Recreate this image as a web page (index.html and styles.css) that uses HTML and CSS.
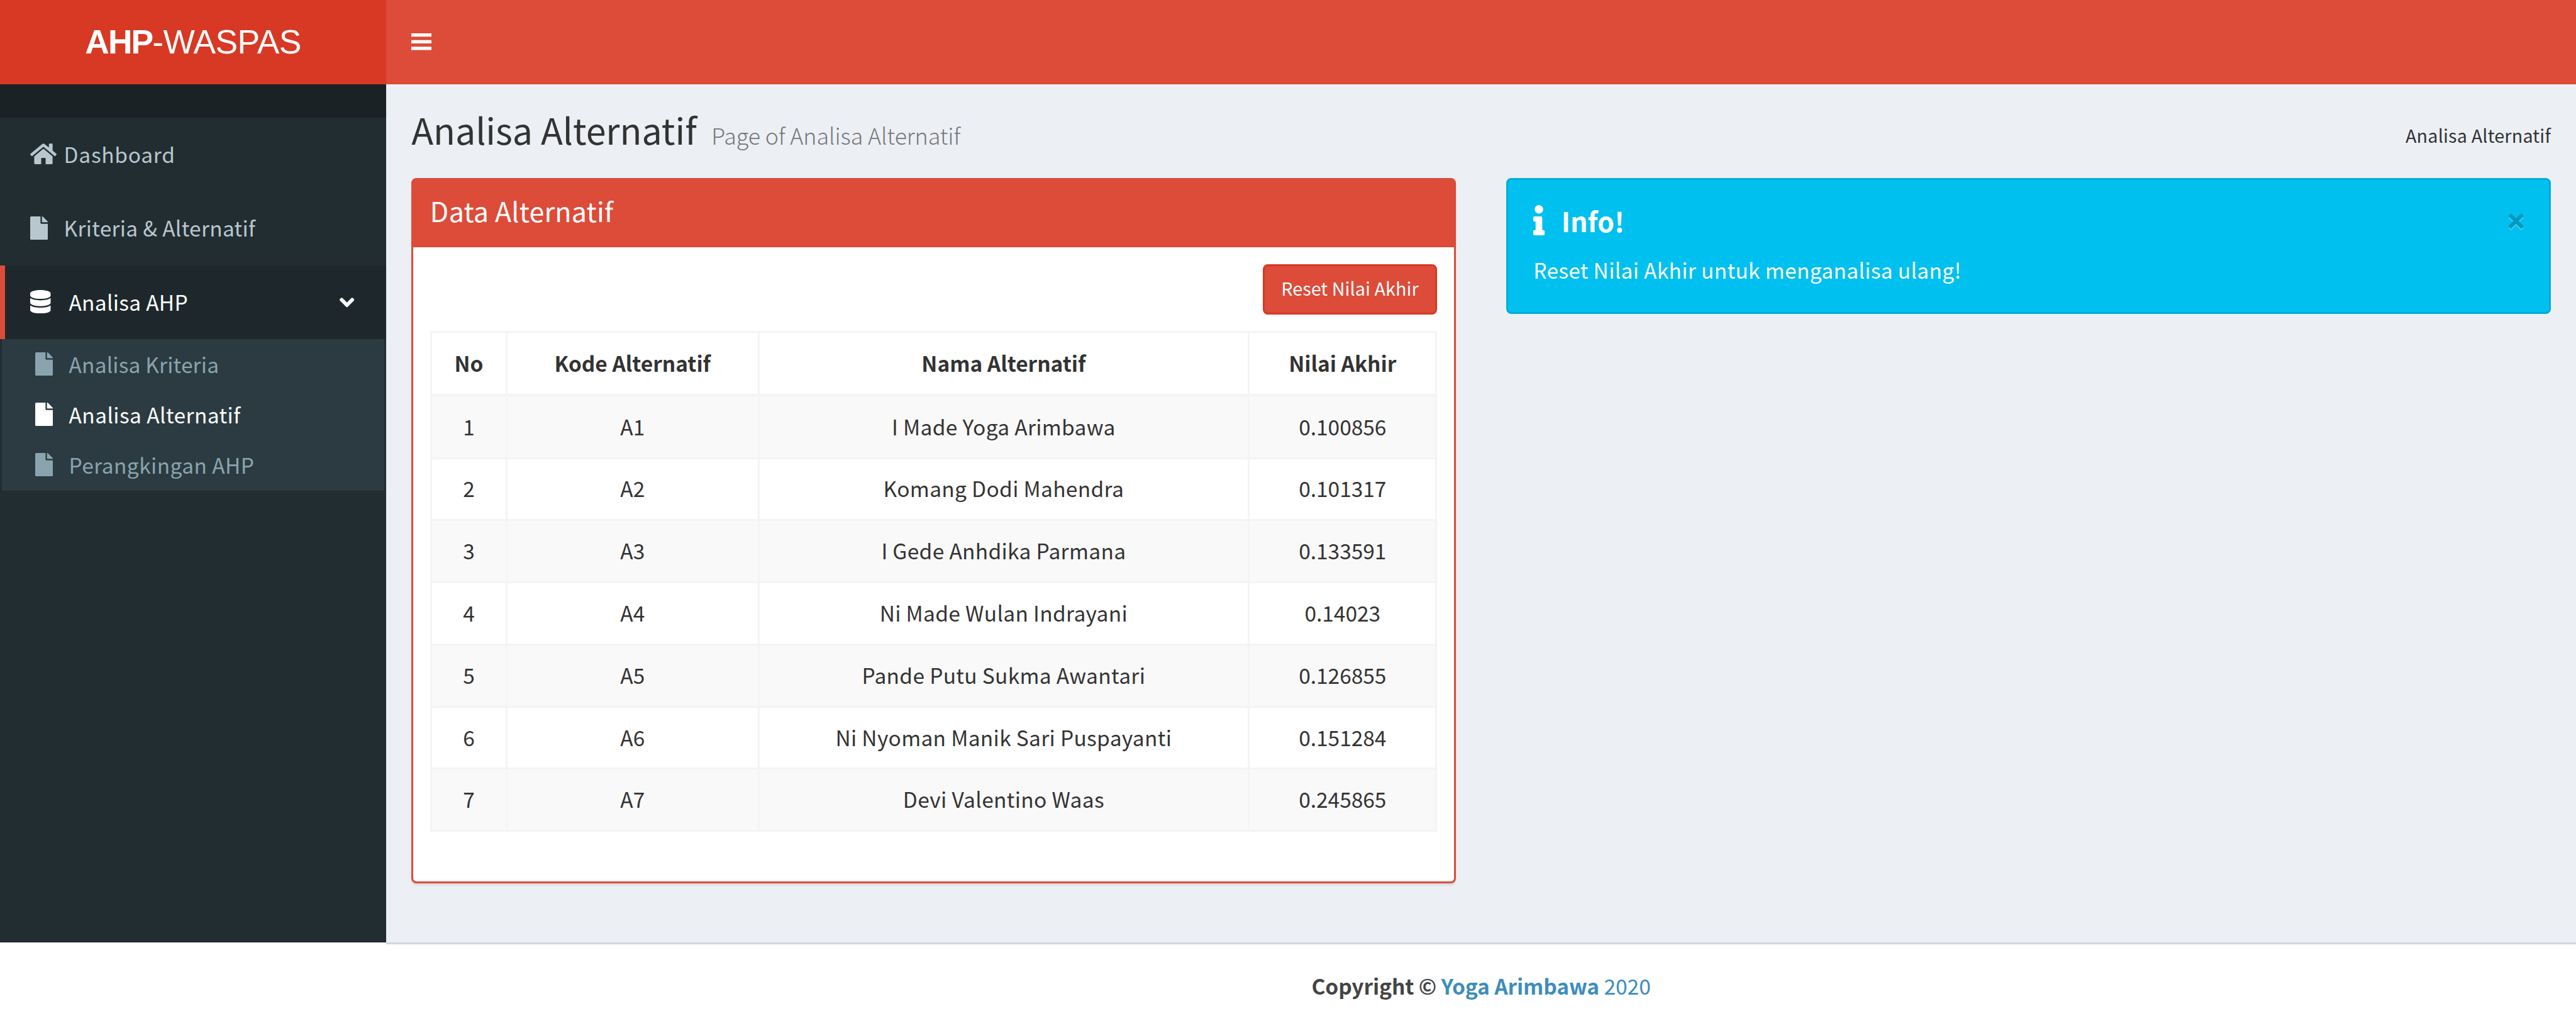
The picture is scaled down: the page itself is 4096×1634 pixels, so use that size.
FILE: index.html
```html
<!DOCTYPE html>
<html lang="id">
<head>
<meta charset="utf-8">
<title>Analisa Alternatif</title>
<link rel="stylesheet" href="styles.css">
</head>
<body>
<svg width="0" height="0" class="sprite">
  <symbol id="home" viewBox="0 0 576 512"><path d="M488 312.7V456c0 13.3-10.7 24-24 24H348c-6.6 0-12-5.4-12-12V356c0-6.6-5.4-12-12-12h-72c-6.6 0-12 5.4-12 12v112c0 6.6-5.4 12-12 12H112c-13.3 0-24-10.7-24-24V312.7c0-3.6 1.6-7 4.4-9.3l188-154.8c4.4-3.6 10.8-3.6 15.3 0l188 154.8c2.7 2.3 4.3 5.7 4.3 9.3zm83.6-60.9L488 182.9V44.4c0-6.6-5.4-12-12-12h-56c-6.6 0-12 5.4-12 12V117l-89.5-73.7c-17.7-14.6-43.3-14.6-61 0L4.4 251.8c-5.1 4.2-5.8 11.8-1.6 16.9l25.5 31c4.2 5.1 11.8 5.8 16.9 1.6l235.2-193.7c4.4-3.6 10.8-3.6 15.3 0l235.2 193.7c5.1 4.2 12.7 3.5 16.9-1.6l25.5-31c4.2-5.2 3.4-12.7-1.7-16.9z"/></symbol>
  <symbol id="file" viewBox="0 0 384 512"><path d="M224 136V0H24C10.7 0 0 10.7 0 24v464c0 13.3 10.7 24 24 24h336c13.3 0 24-10.7 24-24V160H248c-13.2 0-24-10.8-24-24zm160-14.1v6.1H256V0h6.1c6.4 0 12.5 2.5 17 7l97.9 98c4.5 4.5 7 10.6 7 16.9z"/></symbol>
  <symbol id="database" viewBox="0 0 448 512"><path d="M448 73.143v45.714C448 159.143 347.667 192 224 192S0 159.143 0 118.857V73.143C0 32.857 100.333 0 224 0s224 32.857 224 73.143zM448 176v102.857C448 319.143 347.667 352 224 352S0 319.143 0 278.857V176c48.125 33.143 136.208 48.572 224 48.572S399.874 209.143 448 176zm0 160v102.857C448 479.143 347.667 512 224 512S0 479.143 0 438.857V336c48.125 33.143 136.208 48.572 224 48.572S399.874 369.143 448 336z"/></symbol>
  <symbol id="angle" viewBox="0 0 320 512"><path d="M143 352.3L7 216.3c-9.4-9.4-9.4-24.6 0-33.9l22.6-22.6c9.4-9.4 24.6-9.4 33.9 0l96.4 96.4 96.4-96.4c9.4-9.4 24.6-9.4 33.9 0l22.6 22.6c9.4 9.4 9.4 24.6 0 33.9l-136 136c-9.2 9.4-24.4 9.4-33.8 0z"/></symbol>
  <symbol id="info" viewBox="0 0 192 512"><path d="M20 424.229h20V279.771H20c-11.046 0-20-8.954-20-20V212c0-11.046 8.954-20 20-20h112c11.046 0 20 8.954 20 20v212.229h20c11.046 0 20 8.954 20 20V492c0 11.046-8.954 20-20 20H20c-11.046 0-20-8.954-20-20v-47.771c0-11.046 8.954-20 20-20zM96 0C56.235 0 24 32.235 24 72s32.235 72 72 72 72-32.235 72-72S135.764 0 96 0z"/></symbol>
  <symbol id="bars" viewBox="0 0 12 10"><path d="M0 0h12v2H0zM0 4h12v2H0zM0 8h12v2H0z"/></symbol>
</svg>
<header class="main-header">
  <a class="logo"><b>AHP</b>-WASPAS</a>
  <nav class="navbar"><svg class="bars"><use href="#bars"/></svg></nav>
</header>
<div class="wrapper">
  <aside class="sidebar">
    <div class="user-panel"></div>
    <ul class="menu">
      <li class="dashboard"><svg class="icon icon-home"><use href="#home"/></svg>Dashboard</li>
      <li><svg class="icon icon-file"><use href="#file"/></svg>Kriteria &amp; Alternatif</li>
      <li class="active"><svg class="icon icon-db"><use href="#database"/></svg>Analisa AHP<svg class="icon angle"><use href="#angle"/></svg></li>
    </ul>
    <ul class="submenu">
      <li class="criteria"><svg class="icon icon-file"><use href="#file"/></svg>Analisa Kriteria</li>
      <li class="current"><svg class="icon icon-file"><use href="#file"/></svg>Analisa Alternatif</li>
      <li><svg class="icon icon-file"><use href="#file"/></svg>Perangkingan AHP</li>
    </ul>
  </aside>
  <main class="content">
    <section class="content-header">
      <h1>Analisa Alternatif<small>Page of Analisa Alternatif</small></h1>
      <span class="breadcrumb">Analisa Alternatif</span>
    </section>
    <div class="columns">
      <section class="box">
        <h3 class="box-header">Data Alternatif</h3>
        <div class="box-body">
          <div class="tools"><button class="btn">Reset Nilai Akhir</button></div>
          <table class="table">
            <colgroup><col class="c-no"><col class="c-code"><col class="c-name"><col class="c-value"></colgroup>
            <thead><tr><th>No</th><th>Kode Alternatif</th><th>Nama Alternatif</th><th>Nilai Akhir</th></tr></thead>
            <tbody>
              <tr><td>1</td><td>A1</td><td>I Made Yoga Arimbawa</td><td>0.100856</td></tr>
              <tr><td>2</td><td>A2</td><td>Komang Dodi Mahendra</td><td>0.101317</td></tr>
              <tr><td>3</td><td>A3</td><td>I Gede Anhdika Parmana</td><td>0.133591</td></tr>
              <tr><td>4</td><td>A4</td><td>Ni Made Wulan Indrayani</td><td>0.14023</td></tr>
              <tr><td>5</td><td>A5</td><td>Pande Putu Sukma Awantari</td><td>0.126855</td></tr>
              <tr><td>6</td><td>A6</td><td>Ni Nyoman Manik Sari Puspayanti</td><td>0.151284</td></tr>
              <tr><td>7</td><td>A7</td><td>Devi Valentino Waas</td><td>0.245865</td></tr>
            </tbody>
          </table>
        </div>
      </section>
      <section class="alert">
        <button class="close">×</button>
        <h4><svg class="icon-info"><use href="#info"/></svg>Info!</h4>
        <p>Reset Nilai Akhir untuk menganalisa ulang!</p>
      </section>
    </div>
  </main>
</div>
<footer class="main-footer"><p><b>Copyright © <a>Yoga Arimbawa</a></b> <a>2020</a></p></footer>
</body>
</html>
```
FILE: styles.css
```css
/* 1rem equals ten design pixels */
html { font-size: 26.7014px; }
* { box-sizing: border-box; }
body {
  margin: 0;
  height: 100vh;
  overflow: hidden;
  display: flex;
  flex-direction: column;
  background: #fff;
  color: #333;
  font-family: "Noto Sans CJK JP", "Noto Sans", sans-serif;
  font-size: 1.253rem;
  line-height: 1.95rem;
}
.sprite { position: absolute; }
h1, h3, h4, p, ul { margin: 0; padding: 0; font-weight: 400; }
ul { list-style: none; }
svg { display: block; fill: currentColor; flex: none; }
button { font-family: inherit; }

.main-header { display: flex; flex: none; height: 5rem; color: #fff; background: #dd4b39; }
.logo {
  width: 23rem;
  background: #d73925;
  text-align: center;
  font: 2rem/5rem "Liberation Sans", Arial, sans-serif;
  letter-spacing: -0.02rem;
}
.logo b { letter-spacing: -0.07rem; }
.navbar { padding: 2rem 1.5rem; }
.bars { width: 1.2rem; height: 1rem; }

.wrapper { display: flex; flex: 1; }
.sidebar { width: 23rem; flex: none; background: #222d32; color: #b8c7ce; }
.user-panel { height: 2rem; background: #1a2226; }
.menu li {
  display: flex;
  height: 4.4rem;
  padding: 1.2rem 1.91rem 1.2rem 1.5rem;
  border-left: 0.3rem solid transparent;
  letter-spacing: 0.012rem;
}
.menu .dashboard { letter-spacing: 0.028rem; }
.menu .active { background: #1e282c; color: #fff; border-left-color: #dd4b39; }
.icon { height: 1.4rem; margin-top: 0.27rem; }
.icon-home { width: 1.575rem; margin-right: 0.43rem; }
.icon-file { width: 1.05rem; margin-right: 0.955rem; }
.icon-db { width: 1.225rem; margin-right: 1.075rem; }
.angle { width: 0.875rem; margin: 0.3rem 0 0 auto; }
.submenu { margin: 0 0.1rem; background: #2c3b41; color: #8aa4af; }
.submenu li { display: flex; height: 3rem; padding: 0.5rem 0.5rem 0.5rem 2rem; letter-spacing: 0.0165rem; }
.submenu .criteria { letter-spacing: 0.007rem; }
.submenu .current { color: #fff; }

.content { flex: 1; background: #ecf0f5; padding: 0 1.5rem; }
.content-header { height: 5.6rem; padding-top: 1.5rem; display: flex; justify-content: space-between; }
h1 { font-size: 2.148rem; line-height: 2.35rem; letter-spacing: -0.002rem; display: flex; align-items: baseline; }
h1 small { font-size: 1.343rem; font-weight: 300; color: #777; margin-left: 0.88rem; letter-spacing: -0.003rem; }
.breadcrumb { font-size: 1.074rem; padding-top: 0.59rem; letter-spacing: 0.008rem; }

.columns { display: grid; grid-template-columns: 1fr 1fr; gap: 3rem; align-items: start; }
.box {
  height: 42rem;
  border: 3px solid #dd4b39;
  border-radius: 0.3rem;
  background: #fff;
  box-shadow: 0 0.1rem 0.1rem rgba(0, 0, 0, 0.1);
}
.box-header {
  height: 4rem;
  padding: 1rem;
  background: #dd4b39;
  color: #fff;
  font-size: 1.611rem;
  line-height: 1.62rem;
  letter-spacing: 0.007rem;
}
.box-body { padding: 1rem; }
.tools { display: flex; justify-content: flex-end; margin-bottom: 1rem; }
.btn {
  height: 3rem;
  width: 10.4rem;
  padding: 0 0 0.1rem;
  border: 3px solid #d73925;
  border-radius: 0.3rem;
  background: #dd4b39;
  color: #fff;
  font-size: 1.074rem;
  line-height: 1.8rem;
  letter-spacing: 0.004rem;
}
.table { width: 100%; table-layout: fixed; border-spacing: 0; border: solid #f4f4f4; border-width: 3px 3px 0 0; }
.c-no { width: 4.5rem; }
.c-code { width: 15rem; }
.c-name { width: 29.2rem; }
.table th, .table td {
  height: 3.7rem;
  padding: 0 0 0.07rem;
  text-align: center;
  border: solid #f4f4f4;
  border-width: 0 0 3px 3px;
}
.table th { height: 3.8rem; border-bottom-width: 5px; }
.table td:nth-child(3) { letter-spacing: 0.013rem; }
.table tbody tr:nth-child(odd) { background: #f9f9f9; }

.alert {
  height: 8.1rem;
  padding: 1.5rem;
  border: 3px solid #00acd6;
  border-radius: 0.3rem;
  background: #00c0ef;
  color: #fff;
}
.alert h4 { display: flex; height: 2rem; font-size: 1.611rem; font-weight: 700; line-height: 1.82rem; margin-bottom: 0.9rem; }
.alert p { letter-spacing: 0.0134rem; }
.icon-info { width: 0.675rem; height: 1.8rem; margin-right: 1rem; }
.close {
  float: right;
  margin: -0.2rem -0.15rem 0 0;
  padding: 0;
  border: 0;
  background: none;
  color: #000;
  opacity: 0.2;
  text-shadow: 0 0.1rem 0 #fff;
  font: 700 2.1rem/2.1rem "Noto Sans", sans-serif;
}

.main-footer { flex: none; height: 5.1rem; margin-left: 23rem; border-top: 3px solid #d2d6de; padding-top: 1.5rem; text-align: center; color: #444; }
.main-footer b { letter-spacing: -0.003rem; }
.main-footer a { color: #3c8dbc; }
```
